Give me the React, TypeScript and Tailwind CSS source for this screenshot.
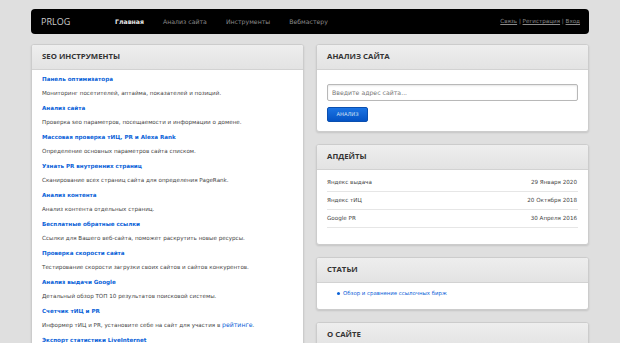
import React from "react";

const tools = [
  { title: "Панель оптимизатора", desc: "Мониторинг посетителей, аптайма, показателей и позиций." },
  { title: "Анализ сайта", desc: "Проверка seo параметров, посещаемости и информации о домене." },
  { title: "Массовая проверка тИЦ, PR и Alexa Rank", desc: "Определение основных параметров сайта списком." },
  { title: "Узнать PR внутренних страниц", desc: "Сканирование всех страниц сайта для определения PageRank." },
  { title: "Анализ контента", desc: "Анализ контента отдельных страниц." },
  { title: "Бесплатные обратные ссылки", desc: "Ссылки для Вашего веб-сайта, поможет раскрутить новые ресурсы." },
  { title: "Проверка скорости сайта", desc: "Тестирование скорости загрузки своих сайтов и сайтов конкурентов." },
  { title: "Анализ выдачи Google", desc: "Детальный обзор ТОП 10 результатов поисковой системы." },
  { title: "Счетчик тИЦ и PR", desc: "rating" },
  { title: "Экспорт статистики LiveInternet", desc: "Выгрузка статистики посещаемости." },
];

const updates = [
  { name: "Яндекс выдача", date: "29 Января 2020" },
  { name: "Яндекс тИЦ", date: "20 Октября 2018" },
  { name: "Google PR", date: "30 Апреля 2016" },
];

const body = "font-['DejaVu_Sans',sans-serif]";

function Panel({ title, children }: { title: string; children?: React.ReactNode }) {
  return (
    <div className="rounded-[3px] border border-[#cccccc] bg-white shadow-[0_1px_2px_rgba(0,0,0,0.12)] overflow-hidden">
      <div className="h-[25px] flex items-center px-[10px] bg-gradient-to-b from-[#eeeeee] to-[#e3e3e3] border-b border-[#d2d2d2]">
        <h2 className="font-['Open_Sans',sans-serif] font-bold text-[7.8px] text-[#333333]">{title}</h2>
      </div>
      {children}
    </div>
  );
}

export default function App() {
  return (
    <div className="min-h-screen bg-[#dfdfdf] pt-[9px]">
      <div className="mx-auto w-[558px]">
        <nav className="h-[25px] rounded-[4px] bg-black flex items-center px-[10px]">
          <span className="font-['Open_Sans',sans-serif] text-[9px] text-[#cccccc] w-[74px]">PRLOG</span>
          <div className={`flex items-center gap-[19px] text-[6.2px] ${body}`}>
            <span className="font-bold text-[#e6e6e6]">Главная</span>
            <span className="text-[#8a8a8a]">Анализ сайта</span>
            <span className="text-[#8a8a8a]">Инструменты</span>
            <span className="text-[#8a8a8a]">Вебмастеру</span>
          </div>
          <div className={`ml-auto mr-[-1px] text-[5.6px] text-[#8a8a8a] ${body}`}>
            <span className="underline">Связь</span> | <span className="underline">Регистрация</span> | <span className="underline">Вход</span>
          </div>
        </nav>

        <div className="mt-[10px] flex gap-[12px] items-start">
          <div className="w-[273px]">
            <Panel title="SEO ИНСТРУМЕНТЫ">
              <div className={`px-[10px] pt-[2px] pb-[10px] ${body}`}>
                {tools.map((t) => (
                  <div key={t.title} className="mb-[1px]">
                    <div className="h-[14px] leading-[14px] text-[5.6px] font-bold text-[#0a62d8]">{t.title}</div>
                    <div className="h-[14px] leading-[14px] text-[5.6px] text-[#444444]">
                      {t.desc === "rating" ? (
                        <>
                          Информер тИЦ и PR, установите себе на сайт для участия в{" "}
                          <span className="text-[#0a62d8] text-[6.2px]">рейтинге</span>.
                        </>
                      ) : (
                        t.desc
                      )}
                    </div>
                  </div>
                ))}
              </div>
            </Panel>
          </div>

          <div className="w-[273px] flex flex-col gap-[12px]">
            <Panel title="АНАЛИЗ САЙТА">
              <div className="px-[10px] pt-[14px] pb-[9px]">
                <input
                  className={`block w-full h-[17px] rounded-[2px] border border-[#b8b8b8] bg-white px-[4px] text-[6.2px] text-[#555555] placeholder:text-[#777777] shadow-[inset_0_1px_2px_rgba(0,0,0,0.1)] outline-none ${body}`}
                  placeholder="Введите адрес сайта..."
                />
                <button
                  className={`block mt-[6px] h-[15px] w-[41px] rounded-[2px] border border-[#0a4fb0] bg-gradient-to-b from-[#1b74e4] to-[#0553c4] text-[5.2px] text-[#d7e3f5] ${body}`}
                >
                  АНАЛИЗ
                </button>
              </div>
            </Panel>

            <Panel title="АПДЕЙТЫ">
              <div className={`px-[10px] pt-[4px] pb-[16px] text-[5.6px] text-[#444444] ${body}`}>
                {updates.map((u) => (
                  <div key={u.name} className="h-[18px] flex items-center justify-between border-b border-[#e6e6e6] pr-[1px]">
                    <span>{u.name}</span>
                    <span>{u.date}</span>
                  </div>
                ))}
              </div>
            </Panel>

            <Panel title="СТАТЬИ">
              <ul className={`pl-[20px] pt-[4px] pb-[10px] text-[5.4px] text-[#0a62d8] ${body}`}>
                <li className="h-[12px] flex items-center gap-[3px]">
                  <span className="w-[3px] h-[3px] rounded-full bg-[#0a62d8]" />
                  Обзор и сравнение ссылочных бирж
                </li>
              </ul>
            </Panel>

            <Panel title="О САЙТЕ">
              <div className="h-[60px]" />
            </Panel>
          </div>
        </div>
      </div>
    </div>
  );
}
